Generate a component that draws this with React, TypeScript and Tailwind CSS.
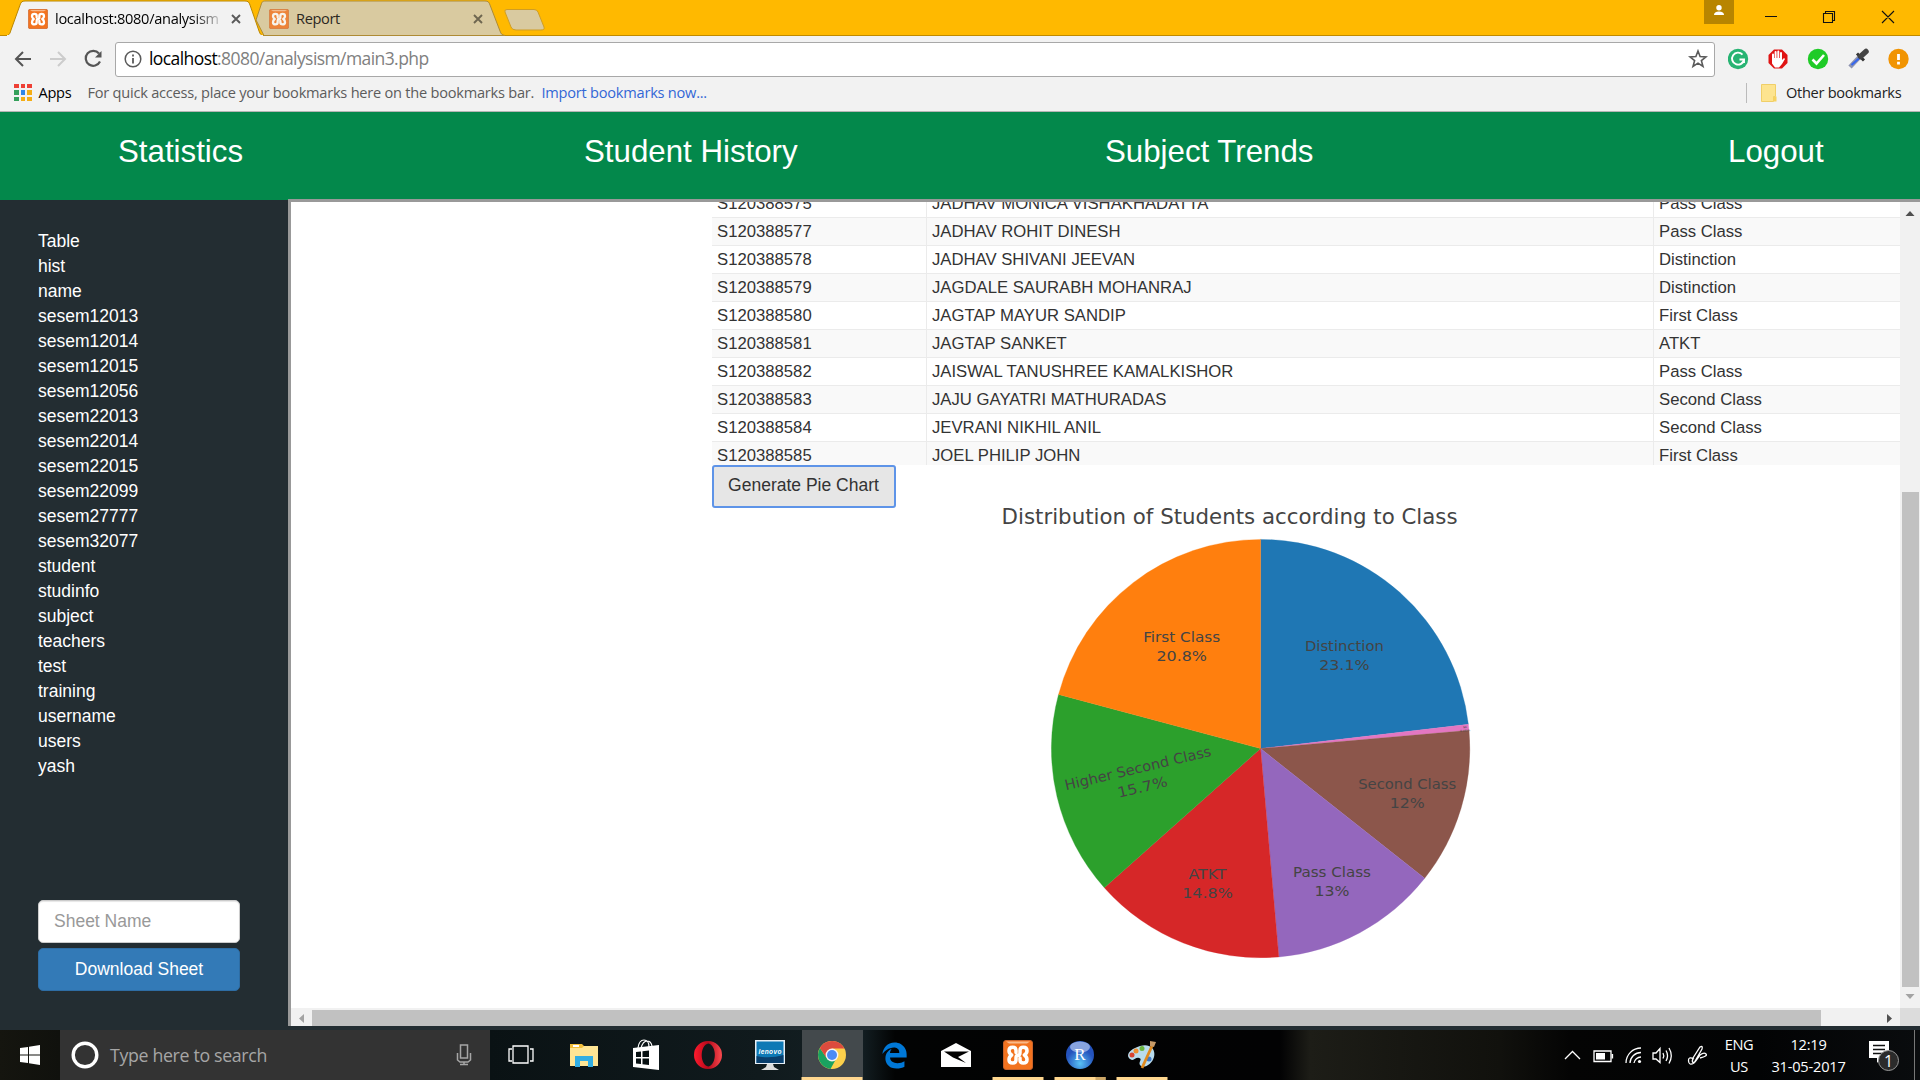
import React from "react";
import { FaEdgeLegacy } from "react-icons/fa6";

const ui = "font-['Open_Sans','Noto_Sans',sans-serif]";

function Xampp({ size }: { size: number }) {
  return (
    <svg width={size} height={size} viewBox="0 0 30 30" className="shrink-0">
      <rect x=".5" y=".5" width="29" height="29" rx="2.5" fill="#f3731f" stroke="#c9622a" />
      <path d="M3 1.500H27L24 3.500H6Z" fill="#f9b98a" />
      <path d="M13 12.500V10.500Q13 7.300 9.700 7.300Q6 7.300 6 10.700Q6 13.300 8.600 15Q6 17 6 19.700Q6 23 9.700 23Q13 23 13 20V18Q13 15.200 15 15.200Q17 15.200 17 12.500V10.500Q17 7.300 20.300 7.300Q24 7.300 24 10.700Q24 13.300 21.400 15Q24 17 24 19.700Q24 23 20.300 23Q17 23 17 20V18" fill="none" stroke="#fff" strokeWidth="3.500" strokeLinecap="round" strokeLinejoin="round" />
    </svg>
  );
}

function TabClose({ color }: { color: string }) {
  return (
    <svg width="10" height="10" viewBox="0 0 10 10" className="shrink-0">
      <path d="M1 1L9 9M9 1L1 9" stroke={color} strokeWidth="1.9" />
    </svg>
  );
}

function TitleBar() {
  return (
    <div className="relative flex h-[36px] w-full border-b border-[#bf8a00] bg-[#ffb900]">
      <div className="relative z-10 ml-[7px] h-[36px] w-[256px] shrink-0">
        <svg className="absolute left-0 top-0" width="256" height="36">
          <path d="M0 36C3 34 3 33 4 30L13 5C14 2 15 1 18 1H238C241 1 242 2 243 5L252 31C253 34 254 35 256 36Z" fill="#f2f2f2" stroke="#b98600" />
          <path d="M0 35.8H256" stroke="#f2f2f2" strokeWidth="1.5" />
        </svg>
        <div className="relative flex h-[36px] items-center pl-[21px] pt-[2px]">
          <Xampp size={20} />
          <span className={`${ui} ml-[7px] w-[165px] overflow-hidden whitespace-nowrap bg-gradient-to-r from-black from-80% to-[#ccc] bg-clip-text text-[14.6px] tracking-[-0.3px] text-transparent`}>localhost:8080/analysism</span>
          <span className="ml-[11px] flex"><TabClose color="#5a5a5a" /></span>
        </div>
      </div>
      <div className="relative ml-[-7px] h-[35px] w-[250px] shrink-0">
        <svg className="absolute left-0 top-0" width="250" height="36">
          <path d="M0 20L5 5C6 2 6 1 10 1H229C232 1 233 2 234 5L244 31C245 34 246 35 249 35.5H8Z" fill="#d9caa0" stroke="#ae8b35" />
        </svg>
        <div className="relative flex h-[36px] items-center pl-[13px] pt-[2px]">
          <span className="flex opacity-80"><Xampp size={20} /></span>
          <span className={`${ui} ml-[7px] w-[167px] text-[14.6px] tracking-[-0.35px] text-[#2b281f]`}>Report</span>
          <span className="ml-[10px] flex"><TabClose color="#6e6650" /></span>
        </div>
      </div>
      <svg className="ml-[-5px] mt-[8px] shrink-0" width="46" height="24">
        <path d="M6 1.500H33Q36 1.500 37 4L43 19Q44 22 40 22H15Q11 22 10 19L4 4Q3 1.500 6 1.500Z" fill="#d9caa0" stroke="#cf9d24" />
      </svg>
      <div className="grow" />
      <div className="mr-[30px] flex h-[24px] w-[30px] justify-center bg-[#b88500]">
        <svg width="12" height="16" className="mt-[4px]"><circle cx="6" cy="3.7" r="2.7" fill="#fff" /><path d="M1 11Q1 7.500 6 7.500T11 11Z" fill="#fff" /></svg>
      </div>
      <svg width="156" height="34" fill="none" stroke="#111" strokeWidth="1.1">
        <path d="M1 16.500H13M59.500 13.500H68.500V22.500H59.500ZM61.500 13.500V11.500H70.500V20.500H68.500M118 11L130 23M130 11L118 23" />
      </svg>
    </div>
  );
}

function Extensions() {
  return (
    <svg width="190" height="24" viewBox="0 0 190 24">
      <circle cx="10" cy="12" r="10.200" fill="#27b473" />
      <path d="M14.500 7.600A6 6 0 1 0 16 12.500H11.500M16 12.500V16" fill="none" stroke="#fff" strokeWidth="1.900" />
      <path d="M46 2.500H54L59.500 8V16L54 21.500H46L40.500 16V8Z" fill="#e01414" />
      <path d="M45 13V7.500M47.600 12V5M50.300 12V4.500M53 12V6" stroke="#fff" strokeWidth="2" fill="none" strokeLinecap="round" />
      <path d="M44 11H54V13L56 11L57 12L54 17L51 20.500H47L44 16.500Z" fill="#fff" />
      <circle cx="90" cy="12" r="10.200" fill="#1fcb27" />
      <path d="M84.500 12.500L88.500 16.500L96 8" fill="none" stroke="#fff" strokeWidth="2.600" />
      <path d="M122 20L131 10.500" stroke="#8d93b0" strokeWidth="4.500" />
      <path d="M123.500 18L131.500 11" stroke="#3566ef" strokeWidth="2" />
      <path d="M129 6.500L136 13.500" stroke="#333" strokeWidth="3" />
      <path d="M132.500 9.500L138 4.500" stroke="#444" strokeWidth="5.500" strokeLinecap="round" />
      <circle cx="170.500" cy="12" r="10.200" fill="#f19402" />
      <path d="M170.500 7V13M170.500 14.700V17.500" stroke="#fff" strokeWidth="2.800" />
    </svg>
  );
}

function Toolbar() {
  return (
    <div className="flex h-[45px] w-full items-center bg-[#f2f2f2] pt-[1px]">
      <svg width="105" height="34" viewBox="0 0 105 34" fill="none" className="ml-[10px] shrink-0">
        <path d="M13 10L6 17L13 24M6 17H21" stroke="#555" strokeWidth="2" />
        <path d="M48 10L55 17L48 24M55 17H40" stroke="#ccc" strokeWidth="2" />
        <path d="M89 11.500A7.500 7.500 0 1 0 90 19.500" stroke="#555" strokeWidth="2.200" />
        <path d="M91.500 9V15.500H85Z" fill="#555" />
      </svg>
      <div className="flex h-[35px] w-[1600px] shrink-0 items-center rounded-[3px] border border-[#a8a8a8] bg-white">
        <svg width="18" height="18" viewBox="0 0 18 18" className="ml-[8px]">
          <circle cx="9" cy="9" r="7.800" fill="none" stroke="#5a5a5a" strokeWidth="1.500" />
          <path d="M9 8V13.500M9 4.500V6.500" stroke="#5a5a5a" strokeWidth="1.800" />
        </svg>
        <span className={`${ui} ml-[7px] grow pb-[2px] text-[17.5px] tracking-[-0.58px] text-[#808080]`}><span className="text-black">localhost</span>:8080/analysism/main3.php</span>
        <svg width="20" height="20" viewBox="0 0 20 20" className="mr-[6px]">
          <path d="M10 2L12.100 7.600L18 7.900L13.400 11.600L15 17.500L10 14.200L5 17.500L6.600 11.600L2 7.900L7.900 7.600Z" fill="none" stroke="#5a5a5a" strokeWidth="1.600" />
        </svg>
      </div>
      <div className="ml-[13px] mt-[-1px] flex"><Extensions /></div>
    </div>
  );
}

const appDots = ["#ee4035", "#ee4035", "#ee4035", "#34a05a", "#2f86e8", "#f5ad14", "#34a05a", "#f5ad14", "#f5ad14"];

function Bookmarks() {
  return (
    <div className={`${ui} flex h-[31px] w-full items-center border-b border-[#b5b5b5] bg-[#f2f2f2] pb-[7px] text-[14.6px] tracking-[-0.3px]`}>
      <div className="ml-[14px] grid grid-cols-3 gap-[2px]">
        {appDots.map((c, i) => <span key={i} className="size-[4.5px]" style={{ background: c }} />)}
      </div>
      <span className="ml-[7px] w-[49px] text-black">Apps</span>
      <span className="w-[454px] whitespace-nowrap tracking-[-0.24px] text-[#5c5c5c]">For quick access, place your bookmarks here on the bookmarks bar.</span>
      <span className="whitespace-nowrap tracking-[-0.24px] text-[#3367d6]">Import bookmarks now...</span>
      <span className="grow" />
      <span className="h-[20px] w-px bg-[#bbb]" />
      <svg width="16" height="18" className="ml-[14px]"><path d="M.5 .5H14.500V12.500H12.500V17.500H.5Z" fill="#fde48f" stroke="#f0cf68" /><path d="M12.500 17.500V12.500H15.500V17.500Z" fill="#f7d25f" /></svg>
      <span className="ml-[9px] w-[134px] whitespace-nowrap text-[#222]">Other bookmarks</span>
    </div>
  );
}

function SiteNav() {
  return (
    <nav className="flex h-[88px] w-full items-start bg-[#03884b] pt-[20px] text-[31.25px] leading-[40px] text-white">
      <span className="ml-[118px] w-[466px]">Statistics</span>
      <span className="w-[521px]">Student History</span>
      <span className="w-[623px]">Subject Trends</span>
      <span>Logout</span>
    </nav>
  );
}

const tables = ["Table", "hist", "name", "sesem12013", "sesem12014", "sesem12015", "sesem12056", "sesem22013", "sesem22014", "sesem22015", "sesem22099", "sesem27777", "sesem32077", "student", "studinfo", "subject", "teachers", "test", "training", "username", "users", "yash"];

function Sidebar() {
  return (
    <aside className="flex w-[288px] shrink-0 flex-col pl-[38px] pt-[29px] text-[17.5px] text-white">
      <ul className="h-[671px]">
        {tables.map((t) => <li key={t} className="h-[25px] leading-[25px]">{t}</li>)}
      </ul>
      <div className="flex h-[43px] w-[202px] items-center rounded-[5px] border border-[#ccc] bg-white pl-[15px] text-[#999] shadow-[inset_0_1px_1px_rgba(0,0,0,0.1)]">Sheet Name</div>
      <button className="mt-[5px] h-[43px] w-[202px] rounded-[5px] border border-[#2e6da4] bg-[#337ab7]">Download Sheet</button>
    </aside>
  );
}

const rows: [string, string, string][] = [
  ["S120388575", "JADHAV MONICA VISHAKHADATTA", "Pass Class"],
  ["S120388577", "JADHAV ROHIT DINESH", "Pass Class"],
  ["S120388578", "JADHAV SHIVANI JEEVAN", "Distinction"],
  ["S120388579", "JAGDALE SAURABH MOHANRAJ", "Distinction"],
  ["S120388580", "JAGTAP MAYUR SANDIP", "First Class"],
  ["S120388581", "JAGTAP SANKET", "ATKT"],
  ["S120388582", "JAISWAL TANUSHREE KAMALKISHOR", "Pass Class"],
  ["S120388583", "JAJU GAYATRI MATHURADAS", "Second Class"],
  ["S120388584", "JEVRANI NIKHIL ANIL", "Second Class"],
  ["S120388585", "JOEL PHILIP JOHN", "First Class"],
];

function ResultTable() {
  return (
    <div className="flex h-[263px] flex-col justify-start overflow-hidden text-[16.7px] leading-[27px] text-[#333]">
      <div className="mt-[-12px]">
        {rows.map((r) => (
          <div key={r[0]} className="grid h-[28px] grid-cols-[215px_727px_1fr] border-b border-[#ebebeb] bg-white even:bg-[#f9f9f9]">
            <span className="border-r border-[#ebebeb] pl-[5px]">{r[0]}</span>
            <span className="border-r border-[#ebebeb] pl-[5px]">{r[1]}</span>
            <span className="pl-[5px]">{r[2]}</span>
          </div>
        ))}
      </div>
    </div>
  );
}

const slices = [
  { v: 50, c: "#1f77b4" },
  { v: 1, c: "#e377c2" },
  { v: 26, c: "#8c564b" },
  { v: 28, c: "#9467bd" },
  { v: 32, c: "#d62728" },
  { v: 34, c: "#2ca02c" },
  { v: 45, c: "#ff7f0e" },
];

const labels = [
  { x: 632.4, n: "Distinction", nw: 79, ny: 142.6, p: "23.1%", pw: 50.5 },
  { x: 469.7, n: "First Class", nw: 77, ny: 133.6, p: "20.8%", pw: 50.5 },
  { x: 695.2, n: "Second Class", nw: 98, ny: 280.6, p: "12%", pw: 35 },
  { x: 620, n: "Pass Class", nw: 78, ny: 369, p: "13%", pw: 35 },
  { x: 495.5, n: "ATKT", nw: 38, ny: 370.6, p: "14.8%", pw: 50.5 },
];

function PieChart() {
  const cx = 548.6, cy = 240.6, r = 209.2, total = 216;
  let acc = 0;
  return (
    <svg width="1188" height="500" viewBox="0 0 1188 500" className="block" style={{ fontFamily: "'DejaVu Sans', sans-serif" }} fill="#444">
      <text x="289.6" y="15.500" fontSize="20.800" textLength="456" lengthAdjust="spacingAndGlyphs">Distribution of Students according to Class</text>
      {slices.map((s) => {
        const a = (acc / total) * 2 * Math.PI;
        acc += s.v;
        const b = (acc / total) * 2 * Math.PI;
        return <path key={s.c} fill={s.c} stroke={s.c} strokeWidth="0.3" d={`M${cx} ${cy}L${cx + r * Math.sin(a)} ${cy - r * Math.cos(a)}A${r} ${r} 0 0 1 ${cx + r * Math.sin(b)} ${cy - r * Math.cos(b)}Z`} />;
      })}
      <g fontSize="14.200" textAnchor="middle">
        {labels.map((l) => (
          <g key={l.n}>
            <text x={l.x} y={l.ny} textLength={l.nw} lengthAdjust="spacingAndGlyphs">{l.n}</text>
            <text x={l.x} y={l.ny + 19.3} textLength={l.pw} lengthAdjust="spacingAndGlyphs">{l.p}</text>
          </g>
        ))}
        <g transform="translate(427 265) rotate(-13.300)">
          <text textLength="150" lengthAdjust="spacingAndGlyphs">Higher Second Class</text>
          <text y="19.500" textLength="51" lengthAdjust="spacingAndGlyphs">15.7%</text>
        </g>
        <g transform="translate(753 220) rotate(-4)" fontSize="2.600">
          <text>NA</text>
          <text y="3.500">0.463%</text>
        </g>
      </g>
    </svg>
  );
}

function Frame() {
  return (
    <main className="mt-[-1px] flex h-[827px] grow flex-col border-l-[3px] border-t-[3px] border-[#999] bg-white">
      <div className="flex h-[806px]">
        <div className="h-[806px] w-[1609px] overflow-hidden pl-[421px]">
          <ResultTable />
          <button className="ml-[-0.5px] flex h-[43px] w-[184px] justify-center rounded-[3px] border-2 border-[#5e94e8] bg-[#e6e6e6] pt-[5px] text-[17.5px] leading-[26px] text-[#333]">Generate Pie Chart</button>
          <PieChart />
        </div>
        <div className="flex w-[20px] flex-col items-center bg-[#f1f1f1]">
          <svg width="20" height="20"><path d="M5.500 14L10 9L14.500 14Z" fill="#505050" /></svg>
          <div className="ml-[1px] mt-[270px] h-[495px] w-[17px] bg-[#c1c1c1]" />
          <svg width="20" height="20"><path d="M5.500 7L10 12L14.500 7Z" fill="#a3a3a3" /></svg>
        </div>
      </div>
      <div className="flex h-[18px] bg-[#f1f1f1]">
        <svg width="21" height="18"><path d="M13 6L8 10.500L13 15Z" fill="#a3a3a3" /></svg>
        <div className="mt-[2px] h-[16px] w-[1509px] bg-[#c1c1c1]" />
        <div className="grow" />
        <svg width="20" height="18"><path d="M7 6L12 10.500L7 15Z" fill="#505050" /></svg>
        <div className="h-[18px] w-[20px] bg-[#dcdcdc]" />
      </div>
    </main>
  );
}

function Chrome() {
  return (
    <svg width="30" height="30" viewBox="0 0 30 30">
      <circle cx="15" cy="15" r="14" fill="#fcd04b" />
      <path d="M2.900 8A14 14 0 0 0 13.500 28.900L19 19L9 17Z" fill="#1aa260" />
      <path d="M2.900 8A14 14 0 0 1 27.500 8.500H15L9.500 18Z" fill="#dd4b3e" />
      <circle cx="15" cy="15" r="6.400" fill="#f4f4f4" /><circle cx="15" cy="15" r="5" fill="#4b8bf5" />
    </svg>
  );
}

const taskIcons: { id: string; line?: string; el: React.ReactNode }[] = [
  { id: "view", el: <svg width="26" height="22" fill="none" stroke="#fff" strokeWidth="1.300" className="ml-[-2px]"><path d="M5 2H20V19H5ZM4 5H1V17H4M22 5H25V17H22" /></svg> },
  { id: "files", el: <svg width="28" height="24"><path d="M0 1H12L14 3H28V23H0Z" fill="#f3bf3b" /><path d="M0 5H12L14 3H28V23H0Z" fill="#ffe594" /><path d="M5 24V13H23V24H18V18H10V24Z" fill="#33aee3" /><rect x="3" y="2" width="6" height="2" fill="#fff" /></svg> },
  { id: "store", el: <svg width="28" height="32"><path d="M6 9Q7 1 12 1T17 8M9 9Q11 2 15 2T20 7" fill="none" stroke="#fff" strokeWidth="1.200" /><path d="M1 9L27 6V31L1 28Z" fill="#fff" /><path d="M4 13L9 12.500V18H4ZM10.500 12.300L17 11.500V18H10.500ZM4 19.500H9V25L4 24.400ZM10.500 19.500H17V26L10.500 25.200Z" fill="#071012" /></svg> },
  { id: "opera", el: <svg width="30" height="30"><defs><linearGradient id="op"><stop offset="0" stopColor="#ff1b2d" /><stop offset=".5" stopColor="#b5091b" /><stop offset="1" stopColor="#fb4b4f" /></linearGradient></defs><path fillRule="evenodd" fill="url(#op)" d="M15 1A14 14 0 0 1 15 29A14 14 0 0 1 15 1ZM15.500 3.500C6.500 5 6.500 25 15.500 26.500C24 24.500 24 5.500 15.500 3.500Z" /></svg> },
  { id: "lenovo", el: <svg width="30" height="30"><rect width="30" height="24" fill="#e6eef5" /><rect x="1.500" y="1.500" width="27" height="21.500" fill="#0d78b5" /><path d="M1.500 16Q15 19 28.500 15V23H1.500Z" fill="#0a3f6d" /><path d="M12 24H18L19 27L24 30H6L11 27Z" fill="#ddd" /><text x="15" y="14" fontSize="6.500" fontWeight="bold" fontStyle="italic" fill="#fff" textAnchor="middle" textLength="23" style={{ fontFamily: "Liberation Sans, sans-serif" }}>lenovo</text></svg> },
  { id: "chrome", line: "w-[61px]", el: <Chrome /> },
  { id: "edge", el: <FaEdgeLegacy size={27} color="#0078d7" /> },
  { id: "mail", el: <svg width="30" height="24"><path d="M0 8L15 0L30 8V24H0Z" fill="#fff" /><path d="M3 8.500H28L17 14L25 20L12 14.500Z" fill="#000" /></svg> },
  { id: "xampp", line: "w-[51px]", el: <Xampp size={30} /> },
  { id: "r", line: "w-[51px]", el: <svg width="30" height="30"><defs><radialGradient id="rg" cy=".8"><stop stopColor="#59c3f5" /><stop offset="1" stopColor="#2453bd" /></radialGradient></defs><circle cx="15" cy="15" r="14" fill="url(#rg)" /><ellipse cx="15" cy="7" rx="10" ry="5.500" fill="#b3c8f0" opacity=".7" /><text x="15" y="20" fontSize="17" fill="#fff" textAnchor="middle" style={{ fontFamily: "Liberation Serif, serif" }}>R</text></svg> },
  { id: "paint", line: "w-[51px]", el: <svg width="32" height="30"><path d="M14 6C24 3 30 9 28 17C26 25 17 29 14 25C12 22 17 19 13 18C9 17 8 22 4 19C-1 15 4 9 14 6Z" fill="#b9dced" /><circle cx="6" cy="15" r="2.500" fill="#d8432f" /><circle cx="10" cy="11" r="2.500" fill="#ef8f2e" /><circle cx="16" cy="8.500" r="2.500" fill="#69b53e" /><circle cx="23" cy="19" r="2.500" fill="#3f78c8" /><path d="M26 6L16 28" stroke="#e08a1e" strokeWidth="2.800" /><path d="M24 6L24 1L30 2L28 7Z" fill="#c79b68" /></svg> },
];

function Taskbar() {
  return (
    <footer className={`${ui} relative flex h-[50px] w-full items-center bg-[linear-gradient(90deg,#15150f_0px,#10110d_60px,#0a1214_490px,#101a1d_760px,#142024_860px,#020303_895px,#020203_1280px,#1d1d17_1310px,#171712_1400px,#11110d_1500px,#040404_1570px,#020304_1760px,#0a0c0e_1920px)] text-white`}>
      <div className="flex w-[60px] justify-center">
        <svg width="20" height="20"><path d="M0 3L8 2V9.400H0ZM9 1.800L20 0V9.400H9ZM0 10.400H8V18L0 17ZM9 10.400H20V20L9 18.300Z" fill="#fff" /></svg>
      </div>
      <div className="flex h-[50px] w-[430px] items-center bg-[#333]">
        <svg width="30" height="30" className="ml-[10px]"><circle cx="15" cy="15" r="11.800" fill="none" stroke="#fff" strokeWidth="3.400" /></svg>
        <span className="ml-[10px] grow text-[17.8px] tracking-[-0.35px] text-[#a6a6a6]">Type here to search</span>
        <svg width="16" height="22" fill="none" stroke="#a6a6a6" strokeWidth="1.500" className="mr-[18px]"><rect x="4.500" y="1" width="7" height="13" /><path d="M1.500 9V16L4 18H12L14.500 16V9M8 18V20M4 20.500H12" /></svg>
      </div>
      <div className="flex h-[50px]">
        {taskIcons.map((t) => (
          <div key={t.id} className="relative flex h-[50px] w-[62.1px] items-center justify-center">
            {t.id === "chrome" && <span className="absolute inset-y-0 left-[1.5px] w-[61px] bg-[#43494c]" />}
            <span className="relative ml-[1px] flex">{t.el}</span>
            {t.line && <span className={`absolute bottom-0 left-[calc(50%+0.5px)] h-[3px] -translate-x-1/2 bg-[#ffd78f] ${t.line}`}>{t.id === "r" && <span className="absolute right-0 top-0 h-[3px] w-[10px] bg-[#cda767]" />}</span>}
          </div>
        ))}
      </div>
      <div className="grow" />
      <svg width="150" height="30" viewBox="0 0 150 30" fill="none" stroke="#fff" strokeWidth="1.300">
        <path d="M4 19L11.500 11.500L19 19" />
        <path d="M33 11H50V21.500H33ZM51.500 14V18.500" /><rect x="35" y="13" width="9" height="6.500" fill="#fff" stroke="none" />
        <path d="M65 23A15 15 0 0 1 80 8M69 23A11 11 0 0 1 80 12.500M73 23A7 7 0 0 1 80 17" /><circle cx="78.500" cy="21.500" r="1.600" fill="#fff" stroke="none" />
        <path d="M92 13H95L99 8.500V22.500L95 19H92ZM102 13Q103.500 15.500 102 18.500M105 10.500Q108 15.500 105 21M108 8Q112.500 15.500 108 23.500" />
        <path d="M133 19Q127 16 127.500 21T133 23L141 9Q142 5 139 7L132 18Q130 24 134 22L139 15Q143 12 145 14T139 18" />
      </svg>
      <div className="ml-[6px] flex w-[44px] flex-col items-center text-[14.6px] leading-[22px] tracking-[-0.4px]"><span>ENG</span><span>US</span></div>
      <div className="flex w-[101px] flex-col items-center pr-[6px] text-[14.6px] leading-[22px] tracking-[-0.2px]"><span>12:19</span><span>31-05-2017</span></div>
      <div className="ml-[7px] flex w-[45px]">
        <svg width="32" height="34" viewBox="0 0 32 34">
          <path d="M0 3H20V20H12L8 25V20H0Z" fill="#fff" /><path d="M4 7.500H16M4 11.500H16M4 15.500H16" stroke="#111" strokeWidth="1.300" />
          <circle cx="19.500" cy="22.500" r="10" fill="#2b2b2b" stroke="#999" /><text x="19.500" y="28.500" fontSize="16" fill="#fff" textAnchor="middle">1</text>
        </svg>
      </div>
      <span className="mr-[5px] h-[50px] w-px bg-[#777]" />
    </footer>
  );
}

export default function App() {
  return (
    <div className="flex h-[1080px] w-[1920px] flex-col overflow-hidden bg-[#232d32] font-['Liberation_Sans',Arial,sans-serif]">
      <TitleBar />
      <Toolbar />
      <Bookmarks />
      <SiteNav />
      <div className="flex h-[830px] w-full">
        <Sidebar />
        <Frame />
      </div>
      <Taskbar />
    </div>
  );
}
